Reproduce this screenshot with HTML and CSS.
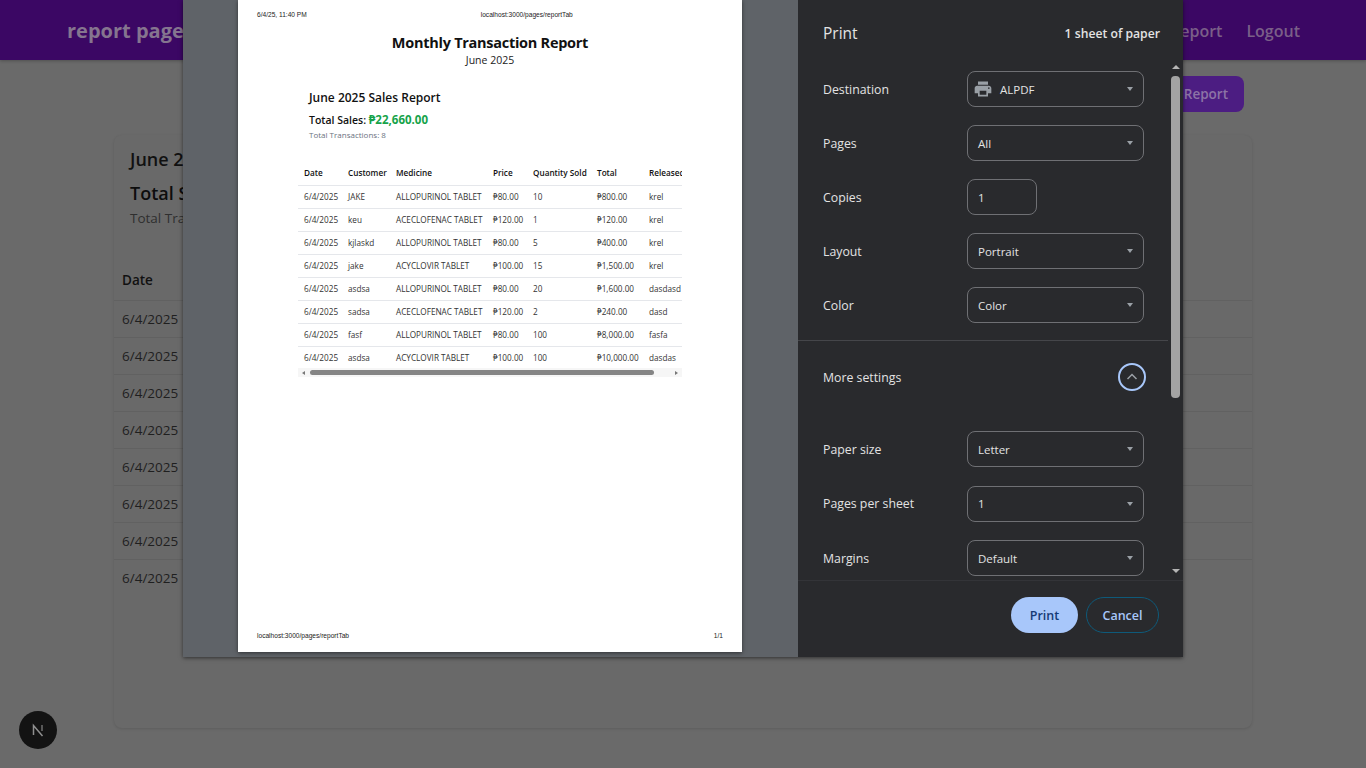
FILE: index.html
```html
<!DOCTYPE html>
<html lang="en">
<head>
    <meta charset="UTF-8">
    <meta name="viewport" content="width=device-width, initial-scale=1.0">
    <title>Monthly Transaction Report</title>
    <link rel="stylesheet" href="styles.css">
</head>
<body>
    <!-- Page behind the print dialog -->
    <nav class="navbar">
        <div class="brand">report page</div>
        <div class="nav-links">
            <a>Report</a>
            <a>Logout</a>
        </div>
    </nav>

    <div class="actions">
        <button class="report-btn">Print Report</button>
    </div>

    <div class="card">
        <h2>June 2025 Sales Report</h2>
        <h3>Total Sales: ₱22,660.00</h3>
        <p>Total Transactions: 8</p>
        <table class="page-table">
            <thead>
                <tr><th>Date</th></tr>
            </thead>
            <tbody>
                <tr><td>6/4/2025</td></tr>
                <tr><td>6/4/2025</td></tr>
                <tr><td>6/4/2025</td></tr>
                <tr><td>6/4/2025</td></tr>
                <tr><td>6/4/2025</td></tr>
                <tr><td>6/4/2025</td></tr>
                <tr><td>6/4/2025</td></tr>
                <tr><td>6/4/2025</td></tr>
            </tbody>
        </table>
    </div>

    <div class="next-badge">
        <svg width="18" height="18" viewBox="0 0 18 18" fill="none">
            <path d="M4.5 14V4.5L13.5 15" stroke="#8f8f8f" stroke-width="1.5"/>
            <path d="M13 4v6" stroke="#6f6f6f" stroke-width="1.5"/>
        </svg>
    </div>

    <!-- Print dialog -->
    <div class="dialog">
        <div class="preview">
            <div class="paper">
                <div class="print-head">
                    <span>6/4/25, 11:40 PM</span>
                    <span class="print-url">localhost:3000/pages/reportTab</span>
                </div>

                <div class="report">
                    <h1>Monthly Transaction Report</h1>
                    <div class="report-month">June 2025</div>

                    <div class="summary">
                        <h2>June 2025 Sales Report</h2>
                        <h3>Total Sales: <span class="green">₱22,660.00</span></h3>
                        <p>Total Transactions: 8</p>
                    </div>

                    <div class="table-wrap">
                        <table class="report-table">
                            <colgroup>
                                <col class="c-date"><col class="c-customer"><col class="c-medicine"><col class="c-price"><col class="c-qty"><col class="c-total"><col class="c-released">
                            </colgroup>
                            <thead>
                                <tr>
                                    <th>Date</th><th>Customer</th><th>Medicine</th><th>Price</th><th>Quantity Sold</th><th>Total</th><th>Released By</th>
                                </tr>
                            </thead>
                            <tbody>
                                <tr><td>6/4/2025</td><td>JAKE</td><td>ALLOPURINOL TABLET</td><td>₱80.00</td><td>10</td><td>₱800.00</td><td>krel</td></tr>
                                <tr><td>6/4/2025</td><td>keu</td><td>ACECLOFENAC TABLET</td><td>₱120.00</td><td>1</td><td>₱120.00</td><td>krel</td></tr>
                                <tr><td>6/4/2025</td><td>kjlaskd</td><td>ALLOPURINOL TABLET</td><td>₱80.00</td><td>5</td><td>₱400.00</td><td>krel</td></tr>
                                <tr><td>6/4/2025</td><td>jake</td><td>ACYCLOVIR TABLET</td><td>₱100.00</td><td>15</td><td>₱1,500.00</td><td>krel</td></tr>
                                <tr><td>6/4/2025</td><td>asdsa</td><td>ALLOPURINOL TABLET</td><td>₱80.00</td><td>20</td><td>₱1,600.00</td><td>dasdasd</td></tr>
                                <tr><td>6/4/2025</td><td>sadsa</td><td>ACECLOFENAC TABLET</td><td>₱120.00</td><td>2</td><td>₱240.00</td><td>dasd</td></tr>
                                <tr><td>6/4/2025</td><td>fasf</td><td>ALLOPURINOL TABLET</td><td>₱80.00</td><td>100</td><td>₱8,000.00</td><td>fasfa</td></tr>
                                <tr><td>6/4/2025</td><td>asdsa</td><td>ACYCLOVIR TABLET</td><td>₱100.00</td><td>100</td><td>₱10,000.00</td><td>dasdas</td></tr>
                            </tbody>
                        </table>
                    </div>
                    <div class="mini-scroll">
                        <span class="mini-left"></span>
                        <span class="mini-thumb"></span>
                        <span class="mini-right"></span>
                    </div>
                </div>

                <div class="print-foot">
                    <span>localhost:3000/pages/reportTab</span>
                    <span>1/1</span>
                </div>
            </div>
        </div>

        <div class="sidebar">
            <div class="side-head">
                <span class="side-title">Print</span>
                <span class="sheets">1 sheet of paper</span>
            </div>

            <div class="side-middle">
                <div class="settings">
                    <div class="row">
                        <label>Destination</label>
                        <div class="select">
                            <svg class="printer" width="20" height="20" viewBox="0 0 24 24" fill="#9aa0a6">
                                <path d="M19 8H5c-1.66 0-3 1.34-3 3v6h4v4h12v-4h4v-6c0-1.66-1.34-3-3-3zm-3 11H8v-5h8v5zm3-7c-.55 0-1-.45-1-1s.45-1 1-1 1 .45 1 1-.45 1-1 1zm-1-9H6v4h12V3z"/>
                            </svg>
                            <span>ALPDF</span>
                        </div>
                    </div>
                    <div class="row">
                        <label>Pages</label>
                        <div class="select"><span>All</span></div>
                    </div>
                    <div class="row">
                        <label>Copies</label>
                        <div class="select copies"><span>1</span></div>
                    </div>
                    <div class="row">
                        <label>Layout</label>
                        <div class="select"><span>Portrait</span></div>
                    </div>
                    <div class="row">
                        <label>Color</label>
                        <div class="select"><span>Color</span></div>
                    </div>

                    <div class="more">
                        <label>More settings</label>
                        <div class="more-btn">
                            <svg width="14" height="14" viewBox="0 0 14 14" fill="none">
                                <path d="M2.5 9L7 4.5L11.5 9" stroke="#9aa0a6" stroke-width="1.5"/>
                            </svg>
                        </div>
                    </div>

                    <div class="row">
                        <label>Paper size</label>
                        <div class="select"><span>Letter</span></div>
                    </div>
                    <div class="row tall">
                        <label>Pages per sheet</label>
                        <div class="select"><span>1</span></div>
                    </div>
                    <div class="row">
                        <label>Margins</label>
                        <div class="select"><span>Default</span></div>
                    </div>
                </div>

                <div class="scrollbar">
                    <span class="arrow-up"></span>
                    <span class="thumb"></span>
                    <span class="arrow-down"></span>
                </div>
            </div>

            <div class="side-foot">
                <button class="btn-print">Print</button>
                <button class="btn-cancel">Cancel</button>
            </div>
        </div>
    </div>
</body>
</html>
```

FILE: styles.css
```css
* {
    box-sizing: border-box;
}

body {
    position: relative;
    height: 768px;
    margin: 0;
    overflow: hidden;
    background-color: #6a6a6a;
    font-family: "Open Sans", "Noto Sans", sans-serif;
}

/* page behind the dialog */
.navbar {
    display: flex;
    justify-content: space-between;
    align-items: center;
    height: 60px;
    padding: 1px 66px 0 67px;
    background-color: #3b0764;
    box-shadow: 0 1px 3px rgba(0, 0, 0, 0.25);
}

.brand {
    color: #85758f;
    font-size: 20px;
    font-weight: 700;
}

.nav-links {
    display: flex;
    gap: 24px;
    color: #7a5f88;
    font-size: 16px;
    font-weight: 600;
}

.actions {
    display: flex;
    justify-content: flex-end;
    padding: 16px 122px 0 0;
}

.report-btn {
    height: 36px;
    padding: 0 16px;
    border: none;
    border-radius: 8px;
    background-color: #4c1d82;
    color: #8c74a6;
    font-family: inherit;
    font-size: 13.5px;
    font-weight: 600;
}

.card {
    height: 593px;
    margin: 23px 114px 0;
    padding-top: 12px;
    border-radius: 8px;
    background-color: #696969;
    box-shadow: 0 1px 3px rgba(0, 0, 0, 0.12);
}

.card h2 {
    margin: 0 0 0 16px;
    color: #111;
    font-size: 18px;
    font-weight: 600;
}

.card h3 {
    margin: 10px 0 0 16px;
    color: #0d0d0d;
    font-size: 18px;
    font-weight: 600;
}

.card p {
    margin: 4px 0 0 16px;
    color: #2f2f2f;
    font-size: 13.5px;
}

.page-table {
    width: 100%;
    margin-top: 36px;
    border-collapse: collapse;
}

.page-table th,
.page-table td {
    height: 37px;
    padding: 0 0 0 8px;
    border-bottom: 1px solid #616161;
    text-align: left;
    font-size: 13.5px;
    color: #1f1f1f;
}

.page-table th {
    padding-bottom: 2px;
    color: #111;
    font-weight: 600;
}

.page-table tr:last-child td {
    border-bottom: none;
}

.next-badge {
    position: absolute;
    left: 19px;
    top: 711px;
    display: flex;
    justify-content: center;
    align-items: center;
    width: 38px;
    height: 38px;
    border-radius: 50%;
    background-color: #131313;
}

/* print dialog */
.dialog {
    position: absolute;
    left: 183px;
    top: 0;
    display: flex;
    width: 1000px;
    height: 657px;
    box-shadow: 0 1px 4px rgba(0, 0, 0, 0.55);
}

.preview {
    width: 615px;
    padding-left: 55px;
    background-color: #5f6368;
}

.paper {
    display: flex;
    flex-direction: column;
    width: 504px;
    height: 652px;
    background-color: white;
    box-shadow: 0 1px 4px rgba(0, 0, 0, 0.5);
}

.print-head,
.print-foot {
    display: flex;
    padding: 0 19px;
    color: #222;
    font-family: "Liberation Sans", Arial, sans-serif;
    font-size: 6.6px;
}

.print-head {
    height: 15px;
    padding-top: 11px;
    line-height: 8px;
}

.print-url {
    margin-left: 174px;
}

.print-foot {
    justify-content: space-between;
    margin-top: auto;
    padding-bottom: 12px;
    line-height: 8px;
}

.report {
    padding: 18px 60px 0;
}

.report h1 {
    margin: 0;
    color: #111;
    font-size: 14.5px;
    font-weight: 700;
    letter-spacing: -0.27px;
    line-height: 20px;
    text-align: center;
}

.report-month {
    color: #222;
    font-size: 10.5px;
    line-height: 14px;
    text-align: center;
}

.summary {
    margin: 23px 0 0 11px;
}

.summary h2 {
    margin: 0;
    color: #111;
    font-size: 12px;
    font-weight: 600;
    line-height: 16px;
}

.summary h3 {
    margin: 6px 0 0;
    color: #111;
    font-size: 10.5px;
    font-weight: 600;
    line-height: 16px;
}

.green {
    color: #16a34a;
    font-size: 11.5px;
    font-weight: 700;
}

.summary p {
    margin: 1px 0 0;
    color: #6b7280;
    font-size: 8px;
    line-height: 12px;
}

.table-wrap {
    width: 384px;
    margin-top: 21px;
    overflow: hidden;
}

.report-table {
    width: 414px;
    border-collapse: collapse;
    table-layout: fixed;
    font-size: 8.2px;
}

.c-date { width: 44px; }
.c-customer { width: 48px; }
.c-medicine { width: 97px; }
.c-price { width: 40px; }
.c-qty { width: 64px; }
.c-total { width: 52px; }
.c-released { width: 69px; }

.report-table th,
.report-table td {
    height: 23px;
    padding: 0 0 0 6px;
    border-bottom: 1px solid #e5e7eb;
    color: #333;
    text-align: left;
    white-space: nowrap;
    overflow: hidden;
}

.report-table th {
    padding-bottom: 2px;
    color: #111;
    font-weight: 600;
}

.report-table tr:last-child td {
    border-bottom: none;
}

.mini-scroll {
    display: flex;
    align-items: center;
    width: 384px;
    height: 9px;
    margin-top: -1px;
    background-color: #f6f6f6;
}

.mini-left {
    margin-left: 4px;
    border-top: 2.5px solid transparent;
    border-bottom: 2.5px solid transparent;
    border-right: 3px solid #777;
}

.mini-thumb {
    width: 344px;
    height: 5px;
    margin-left: 5px;
    border-radius: 3px;
    background-color: #858585;
}

.mini-right {
    margin-left: 21px;
    border-top: 2.5px solid transparent;
    border-bottom: 2.5px solid transparent;
    border-left: 3px solid #777;
}

.sidebar {
    display: flex;
    flex-direction: column;
    width: 385px;
    background-color: #292a2d;
    color: #e3e3e3;
    font-size: 12.3px;
}

.side-head {
    display: flex;
    justify-content: space-between;
    align-items: center;
    height: 62px;
    padding: 4px 23px 0 25px;
}

.side-title {
    font-size: 15.5px;
}

.sheets {
    font-size: 12.2px;
    font-weight: 600;
}

.side-middle {
    display: flex;
    height: 518px;
    overflow: hidden;
}

.settings {
    width: 370px;
}

.row {
    display: flex;
    align-items: center;
    height: 54px;
    padding-left: 25px;
}

.row.tall {
    height: 55px;
}

.row label {
    width: 144px;
}

.select {
    position: relative;
    display: flex;
    align-items: center;
    width: 177px;
    height: 36px;
    padding-left: 10px;
    border: 1px solid #6f7074;
    border-radius: 8px;
    font-size: 11.5px;
}

.select::after {
    content: "";
    position: absolute;
    right: 10px;
    top: 15px;
    border-left: 3.5px solid transparent;
    border-right: 3.5px solid transparent;
    border-top: 4px solid #9aa0a6;
}

.select.copies {
    width: 70px;
}

.select.copies::after {
    display: none;
}

.printer {
    margin: 0 7px 0 -5px;
}

.more {
    display: flex;
    justify-content: space-between;
    align-items: center;
    height: 72px;
    margin-top: 8px;
    margin-bottom: 10px;
    padding: 0 22px 0 25px;
    border-top: 1px solid #45464a;
}

.more label {
    padding-top: 1px;
}

.more-btn {
    display: flex;
    justify-content: center;
    align-items: center;
    width: 28px;
    height: 28px;
    border: 2px solid #a8c7fa;
    border-radius: 50%;
}

.scrollbar {
    display: flex;
    flex-direction: column;
    align-items: center;
    width: 15px;
    padding-top: 3px;
}

.arrow-up {
    border-left: 4.5px solid transparent;
    border-right: 4.5px solid transparent;
    border-bottom: 4px solid #b5b5b5;
}

.thumb {
    width: 9px;
    height: 322px;
    margin-top: 7px;
    border-radius: 4px;
    background-color: #a3a3a3;
}

.arrow-down {
    margin-top: 171px;
    border-left: 4.5px solid transparent;
    border-right: 4.5px solid transparent;
    border-top: 4px solid #b5b5b5;
}

.side-foot {
    display: flex;
    justify-content: flex-end;
    gap: 8px;
    flex: 1;
    padding: 16px 24px 0 0;
    border-top: 1px solid #333438;
}

.side-foot button {
    height: 36px;
    border-radius: 18px;
    font-family: inherit;
    font-size: 12.5px;
    font-weight: 600;
}

.btn-print {
    width: 67px;
    border: none;
    background-color: #a8c7fa;
    color: #153a75;
}

.btn-cancel {
    width: 73px;
    border: 1px solid #0e5a7a;
    background-color: transparent;
    color: #a8c7fa;
}
```
